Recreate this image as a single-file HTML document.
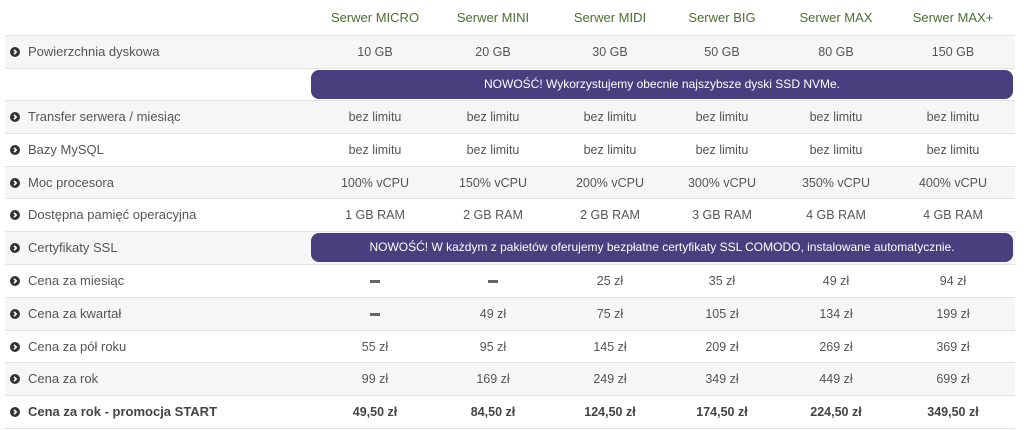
<!DOCTYPE html>
<html><head><meta charset="utf-8"><style>
body{margin:0;width:1024px;height:430px;background:#fff;font-family:"Liberation Sans",sans-serif;font-size:12.5px;color:#555;position:relative;overflow:hidden}
.row{position:absolute;left:5px;width:1010px;height:32px;border-top:1px solid #e2e2e2}
.g{background:#f6f6f6}
.c{position:absolute;top:0;line-height:32px;width:110px;margin-left:-55px;text-align:center;white-space:nowrap}
.l{position:absolute;left:5px;top:0;line-height:32px;font-size:13px}
.l svg{width:10px;height:10px;margin-right:8px;vertical-align:-1px}
.h{position:absolute;top:10px;width:130px;margin-left:-65px;text-align:center;color:#4e6e2e;font-size:13px}
.b{position:absolute;left:311px;width:702px;height:29px;background:#4a3f7e;border-radius:8px;color:#fff;text-align:center;line-height:29px;font-size:12px}
.bold .c,.bold .l{font-weight:bold;color:#444}
.dash{display:inline-block;width:10px;height:3px;background:#666;vertical-align:middle}
</style></head><body>
<svg width="0" height="0" style="position:absolute"><defs><symbol id="i" viewBox="0 0 10 10"><circle cx="5" cy="5" r="5" fill="#333"/><path d="M4 2.8 L6.2 5 L4 7.2" stroke="#fff" stroke-width="1.6" fill="none"/></symbol></defs></svg>
<div class="h" style="left:375px">Serwer MICRO</div>
<div class="h" style="left:493px">Serwer MINI</div>
<div class="h" style="left:610px">Serwer MIDI</div>
<div class="h" style="left:722px">Serwer BIG</div>
<div class="h" style="left:836px">Serwer MAX</div>
<div class="h" style="left:953px">Serwer MAX+</div>

<div class="row g" style="top:35px"><span class="l"><svg><use href="#i"/></svg>Powierzchnia dyskowa</span><span class="c" style="left:370px">10 GB</span><span class="c" style="left:488px">20 GB</span><span class="c" style="left:605px">30 GB</span><span class="c" style="left:717px">50 GB</span><span class="c" style="left:831px">80 GB</span><span class="c" style="left:948px">150 GB</span></div>
<div class="row" style="top:68px"></div>
<div class="b" style="top:70px">NOWOŚĆ! Wykorzystujemy obecnie najszybsze dyski SSD NVMe.</div>
<div class="row g" style="top:100px"><span class="l"><svg><use href="#i"/></svg>Transfer serwera / miesiąc</span><span class="c" style="left:370px">bez limitu</span><span class="c" style="left:488px">bez limitu</span><span class="c" style="left:605px">bez limitu</span><span class="c" style="left:717px">bez limitu</span><span class="c" style="left:831px">bez limitu</span><span class="c" style="left:948px">bez limitu</span></div>
<div class="row" style="top:133px"><span class="l"><svg><use href="#i"/></svg>Bazy MySQL</span><span class="c" style="left:370px">bez limitu</span><span class="c" style="left:488px">bez limitu</span><span class="c" style="left:605px">bez limitu</span><span class="c" style="left:717px">bez limitu</span><span class="c" style="left:831px">bez limitu</span><span class="c" style="left:948px">bez limitu</span></div>
<div class="row g" style="top:166px"><span class="l"><svg><use href="#i"/></svg>Moc procesora</span><span class="c" style="left:370px">100% vCPU</span><span class="c" style="left:488px">150% vCPU</span><span class="c" style="left:605px">200% vCPU</span><span class="c" style="left:717px">300% vCPU</span><span class="c" style="left:831px">350% vCPU</span><span class="c" style="left:948px">400% vCPU</span></div>
<div class="row" style="top:198px"><span class="l"><svg><use href="#i"/></svg>Dostępna pamięć operacyjna</span><span class="c" style="left:370px">1 GB RAM</span><span class="c" style="left:488px">2 GB RAM</span><span class="c" style="left:605px">2 GB RAM</span><span class="c" style="left:717px">3 GB RAM</span><span class="c" style="left:831px">4 GB RAM</span><span class="c" style="left:948px">4 GB RAM</span></div>
<div class="row g" style="top:231px"><span class="l"><svg><use href="#i"/></svg>Certyfikaty SSL</span></div>
<div class="b" style="top:233px">NOWOŚĆ! W każdym z pakietów oferujemy bezpłatne certyfikaty SSL COMODO, instalowane automatycznie.</div>
<div class="row" style="top:264px"><span class="l"><svg><use href="#i"/></svg>Cena za miesiąc</span><span class="c" style="left:370px"><i class="dash"></i></span><span class="c" style="left:488px"><i class="dash"></i></span><span class="c" style="left:605px">25 zł</span><span class="c" style="left:717px">35 zł</span><span class="c" style="left:831px">49 zł</span><span class="c" style="left:948px">94 zł</span></div>
<div class="row g" style="top:297px"><span class="l"><svg><use href="#i"/></svg>Cena za kwartał</span><span class="c" style="left:370px"><i class="dash"></i></span><span class="c" style="left:488px">49 zł</span><span class="c" style="left:605px">75 zł</span><span class="c" style="left:717px">105 zł</span><span class="c" style="left:831px">134 zł</span><span class="c" style="left:948px">199 zł</span></div>
<div class="row" style="top:330px"><span class="l"><svg><use href="#i"/></svg>Cena za pół roku</span><span class="c" style="left:370px">55 zł</span><span class="c" style="left:488px">95 zł</span><span class="c" style="left:605px">145 zł</span><span class="c" style="left:717px">209 zł</span><span class="c" style="left:831px">269 zł</span><span class="c" style="left:948px">369 zł</span></div>
<div class="row g" style="top:362px"><span class="l"><svg><use href="#i"/></svg>Cena za rok</span><span class="c" style="left:370px">99 zł</span><span class="c" style="left:488px">169 zł</span><span class="c" style="left:605px">249 zł</span><span class="c" style="left:717px">349 zł</span><span class="c" style="left:831px">449 zł</span><span class="c" style="left:948px">699 zł</span></div>
<div class="row bold" style="top:395px;border-bottom:1px solid #e2e2e2"><span class="l"><svg><use href="#i"/></svg>Cena za rok - promocja START</span><span class="c" style="left:370px">49,50 zł</span><span class="c" style="left:488px">84,50 zł</span><span class="c" style="left:605px">124,50 zł</span><span class="c" style="left:717px">174,50 zł</span><span class="c" style="left:831px">224,50 zł</span><span class="c" style="left:948px">349,50 zł</span></div>
</body></html>
